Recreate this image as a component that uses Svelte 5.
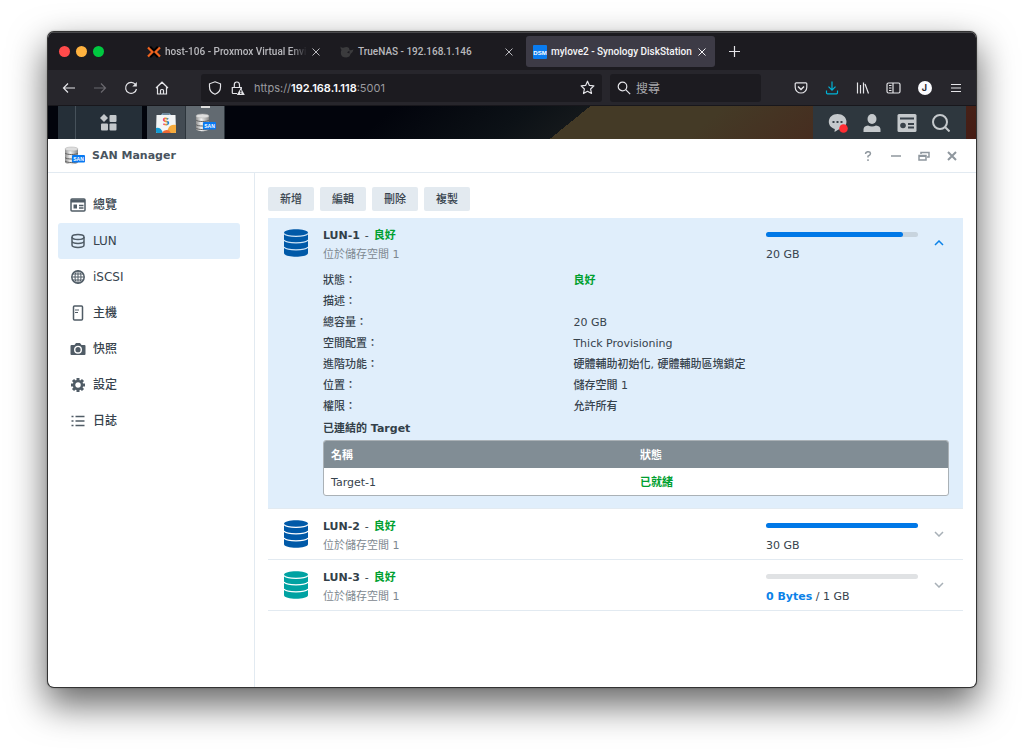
<script lang="ts">
  const tabs = [
    { id: "proxmox", title: "host-106 - Proxmox Virtual Envi" },
    { id: "truenas", title: "TrueNAS - 192.168.1.146" },
    { id: "dsm", title: "mylove2 - Synology DiskStation" },
  ];
  let activeTab = $state("dsm");

  const menu = ["總覽", "LUN", "iSCSI", "主機", "快照", "設定", "日誌"];
  let selected = $state("LUN");

  const actions = ["新增", "編輯", "刪除", "複製"];

  const details = [
    ["狀態", "良好"],
    ["描述", ""],
    ["總容量", "20 GB"],
    ["空間配置", "Thick Provisioning"],
    ["進階功能", "硬體輔助初始化, 硬體輔助區塊鎖定"],
    ["位置", "儲存空間 1"],
    ["權限", "允許所有"],
  ];

  const luns = [
    { name: "LUN-1", used: "", size: "20 GB", percent: 90, color: "#0059a8" },
    { name: "LUN-2", used: "", size: "30 GB", percent: 100, color: "#0059a8" },
    { name: "LUN-3", used: "0 Bytes", size: "1 GB", percent: 0, color: "#00a2a2" },
  ];
  let open = $state("LUN-1");

  const toggle = (name: string) => {
    open = open === name ? "" : name;
  };
</script>

{#snippet sanIcon()}
  <svg width="21" height="20" viewBox="0 0 21 20">
    <defs>
      <linearGradient id="metal">
        <stop offset="0" stop-color="#8d8d8d" />
        <stop offset="0.4" stop-color="#f4f4f4" />
        <stop offset="1" stop-color="#858585" />
      </linearGradient>
    </defs>
    <path d="M1 3v13c0 3 13 3 13 0V3z" fill="url(#metal)" />
    <ellipse cx="7.5" cy="3" rx="6.5" ry="2" fill="#dedede" stroke="#aaa" stroke-width=".5" />
    <path
      d="M1 7c1 2 12 2 13 0M1 11.500c1 2 12 2 13 0M1 15c1 2 12 2 13 0"
      fill="none"
      stroke="#606060"
    />
    <rect x="8" y="9" width="13" height="7.500" rx="1" fill="#0879f2" />
    <text x="14.500" y="14.800" text-anchor="middle" font-size="5" font-weight="bold" fill="#fff">SAN</text>
  </svg>
{/snippet}

{#snippet cross()}
  <svg width="8" height="8" viewBox="0 0 8 8" stroke="currentColor">
    <path d="M.5.5l7 7M7.500.5l-7 7" />
  </svg>
{/snippet}

<main>
  <div class="window">
    <header class="tabbar">
      <div class="lights"><i></i><i></i><i></i></div>
      {#each tabs as tab}
        <div class="tab" class:active={activeTab === tab.id}>
          <button class="pick" onclick={() => (activeTab = tab.id)}>
            {#if tab.id === "proxmox"}
              <svg width="14" height="14" viewBox="0 0 14 14" fill="none">
                <path d="M3 2l4 4 4-4M3 12l4-4 4 4" stroke="#000" stroke-width="2.500" />
                <path d="M1 2.500L5.500 7 1 11.500M13 2.500L8.500 7l4.500 4.500" stroke="#f0641e" stroke-width="2.200" />
              </svg>
            {:else if tab.id === "truenas"}
              <svg width="14" height="14" viewBox="0 0 14 14" fill="#3b3b3d">
                <path d="M.5 1.500Q2 3.500 4 2.500q3-1 5 .5l.5 2q2 .8 4-.8-.5 3.300-3 4.800-.5 3-4 3.500Q1 12.500.8 8 .8 6 1.500 5 .3 3.500.5 1.500z" />
                <path d="M7 7.500l2.500-2v3z" fill="#1c1b20" />
              </svg>
            {:else}
              <svg width="14" height="14" viewBox="0 0 14 14">
                <rect width="14" height="14" rx="1" fill="#0a7cf0" />
                <text x="7" y="9.500" text-anchor="middle" font-size="6" font-weight="bold" fill="#fff">DSM</text>
              </svg>
            {/if}
            <span>{tab.title}</span>
          </button>
          <button class="close" aria-label="Close tab">{@render cross()}</button>
        </div>
      {/each}
      <button class="newtab" aria-label="New tab">
        <svg width="11" height="11" viewBox="0 0 11 11" stroke="currentColor" stroke-width="1.200">
          <path d="M5.500 0v11M0 5.500h11" />
        </svg>
      </button>
    </header>

    <nav class="toolbar">
      <button aria-label="Back">
        <svg width="14" height="14" viewBox="0 0 14 14"><path d="M13 7H1.500M6 2.500L1.500 7 6 11.500" /></svg>
      </button>
      <button class="dim" aria-label="Forward">
        <svg width="14" height="14" viewBox="0 0 14 14"><path d="M1 7h11.500M8 2.500L12.500 7 8 11.500" /></svg>
      </button>
      <button aria-label="Reload">
        <svg width="14" height="14" viewBox="0 0 14 14">
          <path d="M11.500 3.500A5.500 5.500 0 1 0 12.500 8" />
          <path d="M12.800 1v4.500H8.300z" fill="currentColor" stroke="none" />
        </svg>
      </button>
      <button aria-label="Home">
        <svg width="14" height="14" viewBox="0 0 14 14">
          <path d="M1 7l6-5.800L13 7M2.500 6v7h9V6M5.500 13V9.500q0-1 1-1h1q1 0 1 1V13" />
        </svg>
      </button>
      <div class="address">
        <svg width="14" height="14" viewBox="0 0 14 14">
          <path d="M7 .8l5.500 2V6q0 5-5.500 7.300Q1.500 11 1.500 6V2.800z" />
        </svg>
        <svg width="14" height="14" viewBox="0 0 14 14">
          <path d="M6 12.500H2q-.7 0-.7-.7V6.500h9V8M3.300 6.300V4q0-3 2.600-3t2.600 3v2.300" />
          <path d="M9.800 6.800L13.800 14H5.800z" fill="currentColor" stroke="none" />
          <path d="M9.800 9.300v2.200M9.800 12v1" stroke="#1c1b20" />
        </svg>
        <span class="url">https://<b>192.168.1.118</b>:5001</span>
        <svg width="15" height="15" viewBox="0 0 15 15">
          <path d="M7.500 1.200l1.900 4.200 4.500.5-3.300 3.100.9 4.500-4-2.200-4 2.200.9-4.500L1.100 5.900l4.500-.5z" stroke-linejoin="round" />
        </svg>
      </div>
      <label class="search">
        <svg width="14" height="14" viewBox="0 0 14 14">
          <circle cx="5.500" cy="5.500" r="4.300" /><path d="M8.700 8.700l4.500 4.500" />
        </svg>
        <input type="text" placeholder="搜尋" aria-label="搜尋" />
      </label>
      <div class="tools">
        <button aria-label="Pocket">
          <svg width="14" height="14" viewBox="0 0 14 14">
            <path d="M1.200 2.800q0-1 1-1h9.600q1 0 1 1v3.400a5.800 5.800 0 0 1-11.600 0z" />
            <path d="M4 5.500l3 3 3-3" stroke-width="1.500" />
          </svg>
        </button>
        <button class="download" aria-label="Downloads">
          <svg width="14" height="14" viewBox="0 0 14 14">
            <path d="M7 .5v8.500M3.500 5.700L7 9.200l3.500-3.500M1.500 9.500v2.300q0 1 1 1h9q1 0 1-1V9.500" />
          </svg>
        </button>
        <button aria-label="Library">
          <svg width="14" height="14" viewBox="0 0 14 14"><path d="M1.500 1.500v11M4.500 4v8.500M7.500 1.500v11M9 3l3.500 9.500" /></svg>
        </button>
        <button aria-label="Sidebar">
          <svg width="15" height="14" viewBox="0 0 15 14">
            <rect x="1" y="2" width="13" height="10" rx="1.500" />
            <path d="M7 2v10M3 4.500h2.500M3 7h2.500M3 9.500h2.500" />
          </svg>
        </button>
        <button aria-label="Account"><span class="account">J</span></button>
        <button aria-label="Menu">
          <svg width="14" height="14" viewBox="0 0 14 14"><path d="M2 3.500h10M2 7h10M2 10.500h10" /></svg>
        </button>
      </div>
    </nav>

    <div class="desktop">
      <button class="mainmenu" aria-label="Main menu">
        <svg width="17" height="17" viewBox="0 0 17 17" fill="#c4c8cb">
          <path d="M4 0l4 4-4 4-4-4z" />
          <rect x="9.500" y="1" width="7" height="7" rx="1" />
          <rect x="1" y="9.500" width="7" height="7" rx="1" />
          <rect x="9.500" y="9.500" width="7" height="7" rx="1" />
        </svg>
      </button>
      <button class="app" aria-label="Package Center">
        <svg width="20" height="20" viewBox="0 0 20 20">
          <path d="M6 3V1h8v2" fill="none" stroke="#9dc8e8" />
          <path d="M.5 2h19l.5 17q0 1-1 1H1q-1 0-1-1z" fill="#f3f5f6" />
          <path d="M0 15q5-1 7 5H1q-1 0-1-1z" fill="#149bd3" />
          <path d="M12 16q2-5 8-4v7q0 1-1 1h-8q0-3 1-4z" fill="#f6ab3c" />
          <path d="M6 20q2-4 7-2.500l2 2.500z" fill="#f06a35" />
          <path d="M12.300 6q-4.600-1.700-4.600.7 0 1.200 2.300 1.600 2.600.5 2.300 2-.8 2.400-5 .7" fill="none" stroke="url(#rainbow)" stroke-width="1.800" />
          <defs>
            <linearGradient id="rainbow">
              <stop offset="0" stop-color="#ee3d8f" />
              <stop offset=".5" stop-color="#f7a31a" />
              <stop offset="1" stop-color="#1685e0" />
            </linearGradient>
          </defs>
        </svg>
      </button>
      <button class="app running" aria-label="SAN Manager">{@render sanIcon()}</button>
      <div class="tray">
        <button aria-label="Notifications">
          <svg width="20" height="20" viewBox="0 0 20 20">
            <path d="M9.500 1c5 0 9 3.300 9 7.800s-4 7.700-8 7.700l-4 2.500.3-3C3 15 .8 12 .8 8.800.8 4.300 4.500 1 9.500 1z" fill="#c5c9cc" />
            <path d="M4.500 8h2v2h-2zM8.500 8h2v2h-2zM12.500 8h2v2h-2z" fill="#39424a" />
            <circle cx="15.500" cy="15.500" r="4.300" fill="#ff2d33" />
          </svg>
        </button>
        <button aria-label="Options">
          <svg width="18" height="18" viewBox="0 0 18 18" fill="#c5c9cc">
            <ellipse cx="9" cy="5" rx="4.500" ry="5" />
            <path d="M.5 18v-2.500q0-3.500 4.500-4 4 2.200 8 0 4.500.5 4.500 4V18z" />
          </svg>
        </button>
        <button aria-label="Widgets">
          <svg width="20" height="18" viewBox="0 0 20 18">
            <rect x=".5" width="19" height="18" rx="1.500" fill="#c5c9cc" />
            <path d="M3 4.500h14" stroke="#39424a" stroke-width="2" />
            <circle cx="6" cy="11.500" r="2.800" fill="#39424a" />
            <path d="M11 10h6M11 13.500h6" stroke="#39424a" stroke-width="2" />
          </svg>
        </button>
        <button aria-label="Search">
          <svg width="18" height="18" viewBox="0 0 18 18" fill="none" stroke="#c5c9cc" stroke-width="2">
            <circle cx="8" cy="8" r="7" /><path d="M13 13l4.500 4.500" />
          </svg>
        </button>
      </div>
    </div>

    <div class="titlebar">
      {@render sanIcon()}
      <h1>SAN Manager</h1>
      <button aria-label="Help">
        <svg width="10" height="10" viewBox="0 0 10 10"><path d="M2.500 3q0-2.300 2.500-2.300T7.500 2.800Q7.500 4 5 5.200v1.300M5 8.300V10" /></svg>
      </button>
      <button aria-label="Minimize">
        <svg width="10" height="10" viewBox="0 0 10 10"><path d="M0 5h10" /></svg>
      </button>
      <button aria-label="Restore">
        <svg width="12" height="10" viewBox="0 0 12 10">
          <path d="M3 3V1.500h8V6H9" /><path d="M1 4.500h7V9H1z" /><path d="M1 5.200h7" />
        </svg>
      </button>
      <button aria-label="Close">
        <svg width="10" height="10" viewBox="0 0 10 10"><path d="M1 1l8 8M9 1L1 9" stroke-width="2" /></svg>
      </button>
    </div>

    <div class="body">
      <aside>
        {#each menu as item, i}
          <button class:selected={selected === item} onclick={() => (selected = item)}>
            <svg width="16" height="16" viewBox="0 0 16 16" fill="none" stroke="#505c66" stroke-width="1.500">
              {#if i === 0}
                <rect x="1" y="2" width="14" height="12" rx="1" />
                <path d="M1 4h14" stroke-width="3" />
                <path d="M3.500 7.500h3.500v4H3.500z" fill="#505c66" stroke="none" />
                <path d="M9 8.500h4.500M9 11h4.500" />
              {:else if i === 1}
                <ellipse cx="8" cy="4" rx="6" ry="2.500" />
                <path d="M2 4v8c0 3.200 12 3.200 12 0V4M2 8c0 3.200 12 3.200 12 0" />
              {:else if i === 2}
                <circle cx="8" cy="8" r="6.200" />
                <ellipse cx="8" cy="8" rx="3" ry="6.200" stroke-width="1" />
                <path d="M8 2v12M2 8h12M3 5h10M3 11h10" stroke-width="1" />
              {:else if i === 3}
                <rect x="3.500" y="1" width="9" height="14" rx="1" />
                <path d="M5 5h4M5 7.500h3" stroke-width="1" />
              {:else if i === 4}
                <path d="M1.500 4h3L6 2h4l1.500 2h3q1 0 1 1v8q0 1-1 1h-13q-1 0-1-1V5q0-1 1-1z" fill="#505c66" stroke="none" />
                <circle cx="8" cy="8.700" r="3.300" stroke="#fff" stroke-width="1.400" />
              {:else if i === 5}
                <path d="M8 1v14M1 8h14M3 3l10 10M13 3L3 13" stroke-width="3" />
                <circle cx="8" cy="8" r="4" fill="#fff" stroke-width="2.500" />
              {:else}
                <path d="M1.500 3.500h2M1.500 8h2M1.500 12.500h2M5.500 3.500h9M5.500 8h9M5.500 12.500h9" />
              {/if}
            </svg>
            {item}
          </button>
        {/each}
      </aside>

      <section>
        <div class="actions">
          {#each actions as action}
            <button>{action}</button>
          {/each}
        </div>

        {#each luns as lun}
          <article class:open={open === lun.name}>
            <div class="summary">
              <svg width="24" height="28" viewBox="0 0 24 28" fill={lun.color}>
                <path d="M0 4c0-5 24-5 24 0v20c0 5-24 5-24 0z" />
                <path
                  d="M0 4.500c2 3.700 22 3.700 24 0M0 11c2 3.700 22 3.700 24 0M0 18c2 3.700 22 3.700 24 0"
                  fill="none"
                  stroke={open === lun.name ? "#cfe4f6" : "#fff"}
                  stroke-width="1.200"
                />
              </svg>
              <div class="name">
                <h2>{lun.name} <span class="dash">-</span> <span class="good">良好</span></h2>
                <p>位於儲存空間 1</p>
              </div>
              <div class="usage">
                <div class="bar"><div style="width: {lun.percent}%"></div></div>
                <p>
                  {#if lun.used}<b>{lun.used}</b>{" / "}{/if}{lun.size}
                </p>
              </div>
              <button class="toggle" aria-label={lun.name} onclick={() => toggle(lun.name)}>
                <svg width="10" height="6" viewBox="0 0 10 6" fill="none" stroke="currentColor" stroke-width="1.500">
                  <path d={open === lun.name ? "M1 5l4-4 4 4" : "M1 1l4 4 4-4"} />
                </svg>
              </button>
            </div>

            {#if open === lun.name}
              <div class="details">
                <dl>
                  {#each details as [label, value]}
                    <dt>{label}：</dt>
                    <dd class:good={label === "狀態"}>{value}</dd>
                  {/each}
                </dl>
                <h3>已連結的 Target</h3>
                <div class="targets">
                  <table>
                    <thead>
                      <tr><th>名稱</th><th>狀態</th></tr>
                    </thead>
                    <tbody>
                      <tr><td>Target-1</td><td class="good">已就緒</td></tr>
                    </tbody>
                  </table>
                </div>
              </div>
            {/if}
          </article>
        {/each}
      </section>
    </div>
  </div>
</main>

<style>
  :global(body) {
    background: #fff;
  }

  main {
    box-sizing: border-box;
    min-height: 100vh;
    padding: 32px 48px 63px;
    display: flex;
    font: 11px/20px "DejaVu Sans", "Noto Sans CJK TC", sans-serif;
    color: #37434d;
  }
  main :global(*) {
    box-sizing: border-box;
  }
  h1,
  h2,
  h3,
  p,
  dl,
  dd {
    margin: 0;
  }
  button {
    border: 0;
    padding: 0;
    background: none;
    font: inherit;
    color: inherit;
    display: flex;
    align-items: center;
    justify-content: center;
  }
  svg {
    flex: none;
  }
  svg text {
    font-family: "Liberation Sans", sans-serif;
  }

  .window {
    flex: 1;
    min-width: 0;
    display: flex;
    flex-direction: column;
    border-radius: 6px;
    overflow: hidden;
    background: #fff;
    box-shadow:
      0 0 0 1px #333,
      0 0 2px 1px rgba(0, 0, 0, 0.3),
      0 16px 36px 2px rgba(0, 0, 0, 0.6);
  }

  /* browser */
  .tabbar,
  .toolbar {
    display: flex;
    align-items: center;
    color: #e4e4e8;
    font-family: Inter, "Noto Sans CJK TC", sans-serif;
  }
  .tabbar {
    height: 38px;
    gap: 4px;
    background: #1c1b20;
    border-top: 1px solid #4a4a4d;
  }
  .lights {
    display: flex;
    gap: 6px;
    width: 88px;
    padding-left: 11px;
  }
  .lights i {
    width: 11px;
    height: 11px;
    border-radius: 50%;
    background: #ff4b4b;
  }
  .lights i:nth-child(2) {
    background: #ffb23f;
  }
  .lights i:nth-child(3) {
    background: #00c840;
  }
  .tab {
    width: 189px;
    height: 31px;
    padding: 0 9px 0 7px;
    display: flex;
    align-items: center;
    gap: 3px;
    border-radius: 3px;
    color: #b9b9bd;
    font-family: Roboto, sans-serif;
    font-size: 10px;
    font-weight: 500;
  }
  .tab.active {
    background: #3d3b46;
    color: #f5f5f7;
  }
  .pick {
    flex: 1;
    min-width: 0;
    gap: 4px;
    justify-content: flex-start;
  }
  .pick span {
    white-space: nowrap;
  }
  .tab:nth-child(2) .pick span {
    mask-image: linear-gradient(to left, transparent, #000 16px);
  }
  .newtab {
    width: 30px;
    height: 30px;
  }
  .toolbar {
    height: 35px;
    padding: 0 5px;
    background: #27262c;
  }
  .toolbar svg {
    fill: none;
    stroke: currentColor;
    stroke-width: 1.2;
  }
  .toolbar button {
    width: 31px;
    height: 28px;
  }
  .toolbar .dim {
    color: #69686e;
  }
  .address,
  .search {
    height: 28px;
    border-radius: 3px;
    background: #1c1b20;
    display: flex;
    align-items: center;
    gap: 9px;
    padding: 0 7px;
  }
  .address {
    flex: 1;
    margin-left: 24px;
  }
  .url {
    flex: 1;
    font-size: 11px;
    color: #9a9a9f;
  }
  .url b {
    font-weight: 600;
    color: #fbfbfe;
  }
  .search {
    width: 151px;
    margin: 0 24px 0 8px;
    gap: 5px;
  }
  .search input {
    width: 100%;
    border: 0;
    padding: 0;
    background: none;
    color: inherit;
    font: 12px/20px "Noto Sans CJK TC", sans-serif;
  }
  .search input::placeholder {
    color: #a9a9ad;
    opacity: 1;
  }
  .tools {
    display: flex;
  }
  .toolbar .download {
    color: #00b4d8;
  }
  .account {
    width: 14px;
    height: 14px;
    border-radius: 50%;
    background: #fbfbfe;
    color: #27262c;
    font-size: 9px;
    font-weight: 700;
    line-height: 14px;
  }

  /* DSM taskbar over the wallpaper */
  .desktop {
    height: 34px;
    padding: 0 10px;
    display: flex;
    border-top: 1px solid #18171c;
    background: linear-gradient(141deg, #02040c 36%, #0c1116 50%, #14181b 56%, #443a26 56%, #443a26 70%, #462e20 82%, #461c14);
  }
  .mainmenu {
    width: 84px;
    padding-left: 17px;
    margin-right: 5px;
    background: linear-gradient(to right, transparent 17px, #46515a 17px, #46515a 18px, transparent 18px) #252f38;
  }
  .app {
    width: 39px;
    background: #434b53;
    border-right: 1px solid #2d353c;
  }
  .running {
    background: linear-gradient(#ddd, #ddd) top / 9px 2px no-repeat #626a71;
  }
  .tray {
    width: 153px;
    margin-left: auto;
    padding: 0 8px;
    display: flex;
    background: #2e373e;
  }
  .tray button {
    flex: 1;
  }

  /* SAN Manager */
  .titlebar {
    height: 34px;
    padding: 0 10px 0 16px;
    display: flex;
    align-items: center;
    border-bottom: 1px solid #e2eaf1;
  }
  h1 {
    flex: 1;
    margin-left: 7px;
    font-size: 11px;
    color: #49545e;
  }
  .titlebar button {
    width: 28px;
    height: 28px;
  }
  .titlebar button svg {
    fill: none;
    stroke: #8f979e;
    stroke-width: 1.5;
  }

  .body {
    flex: 1;
    display: flex;
  }
  aside {
    width: 207px;
    padding: 14px 14px 14px 10px;
    border-right: 1px solid #e2eaf1;
  }
  aside button {
    width: 100%;
    height: 36px;
    padding-left: 12px;
    gap: 7px;
    justify-content: flex-start;
    border-radius: 3px;
    font-size: 12px;
    line-height: 22px;
    font-weight: 500;
  }
  .selected {
    background: #e0eefb;
  }

  section {
    flex: 1;
    min-width: 0;
    padding: 14px 13px;
  }
  .actions {
    display: flex;
    gap: 6px;
    margin-bottom: 7px;
  }
  .actions button {
    width: 46px;
    height: 24px;
    padding-top: 2px;
    border-radius: 2px;
    background: #e3eaf0;
    font-weight: 500;
  }

  article {
    border-bottom: 1px solid #e2eaf1;
  }
  article.open {
    background: #e0eefb;
  }
  .summary {
    height: 50px;
    display: flex;
    align-items: center;
    padding: 0 10px 0 16px;
  }
  .name {
    flex: 1;
    margin-left: 15px;
    padding-top: 6px;
  }
  .name p {
    color: #7d8890;
  }
  h2,
  h3 {
    font-size: 11px;
    line-height: 18px;
    color: #333f49;
  }
  .dash {
    margin: 0 1px;
    font-weight: 400;
  }
  .good {
    color: #00a030;
    font-weight: 700;
  }
  .usage {
    width: 152px;
    margin-right: 7px;
    padding-top: 10px;
  }
  .usage p {
    margin-top: 8px;
  }
  .usage b {
    color: #0b82e8;
  }
  .bar {
    height: 5px;
    border-radius: 3px;
    background: #e0e2e4;
  }
  .open .bar {
    background: #c8d4de;
  }
  .bar div {
    height: 5px;
    border-radius: 3px;
    background: #0078e7;
  }
  .toggle {
    width: 28px;
    height: 28px;
    color: #a8b0b7;
  }
  .open .toggle {
    color: #0b82e8;
  }

  .details {
    padding: 2px 14px 12px 55px;
  }
  dl {
    display: grid;
    grid-template-columns: 40% 60%;
    line-height: 21px;
    font-weight: 500;
  }
  dd {
    min-height: 21px;
  }
  h3 {
    line-height: 23px;
  }
  .targets {
    border: 1px solid #aab1b6;
    border-radius: 3px;
    overflow: hidden;
    background: #fff;
  }
  table {
    width: 100%;
    table-layout: fixed;
    border-collapse: collapse;
  }
  th,
  td {
    height: 27px;
    padding: 2px 7px 0;
    text-align: left;
  }
  th + th,
  td + td {
    padding-left: 4px;
  }
  th {
    background: #818d95;
    color: #fff;
    font-weight: 700;
  }
</style>
